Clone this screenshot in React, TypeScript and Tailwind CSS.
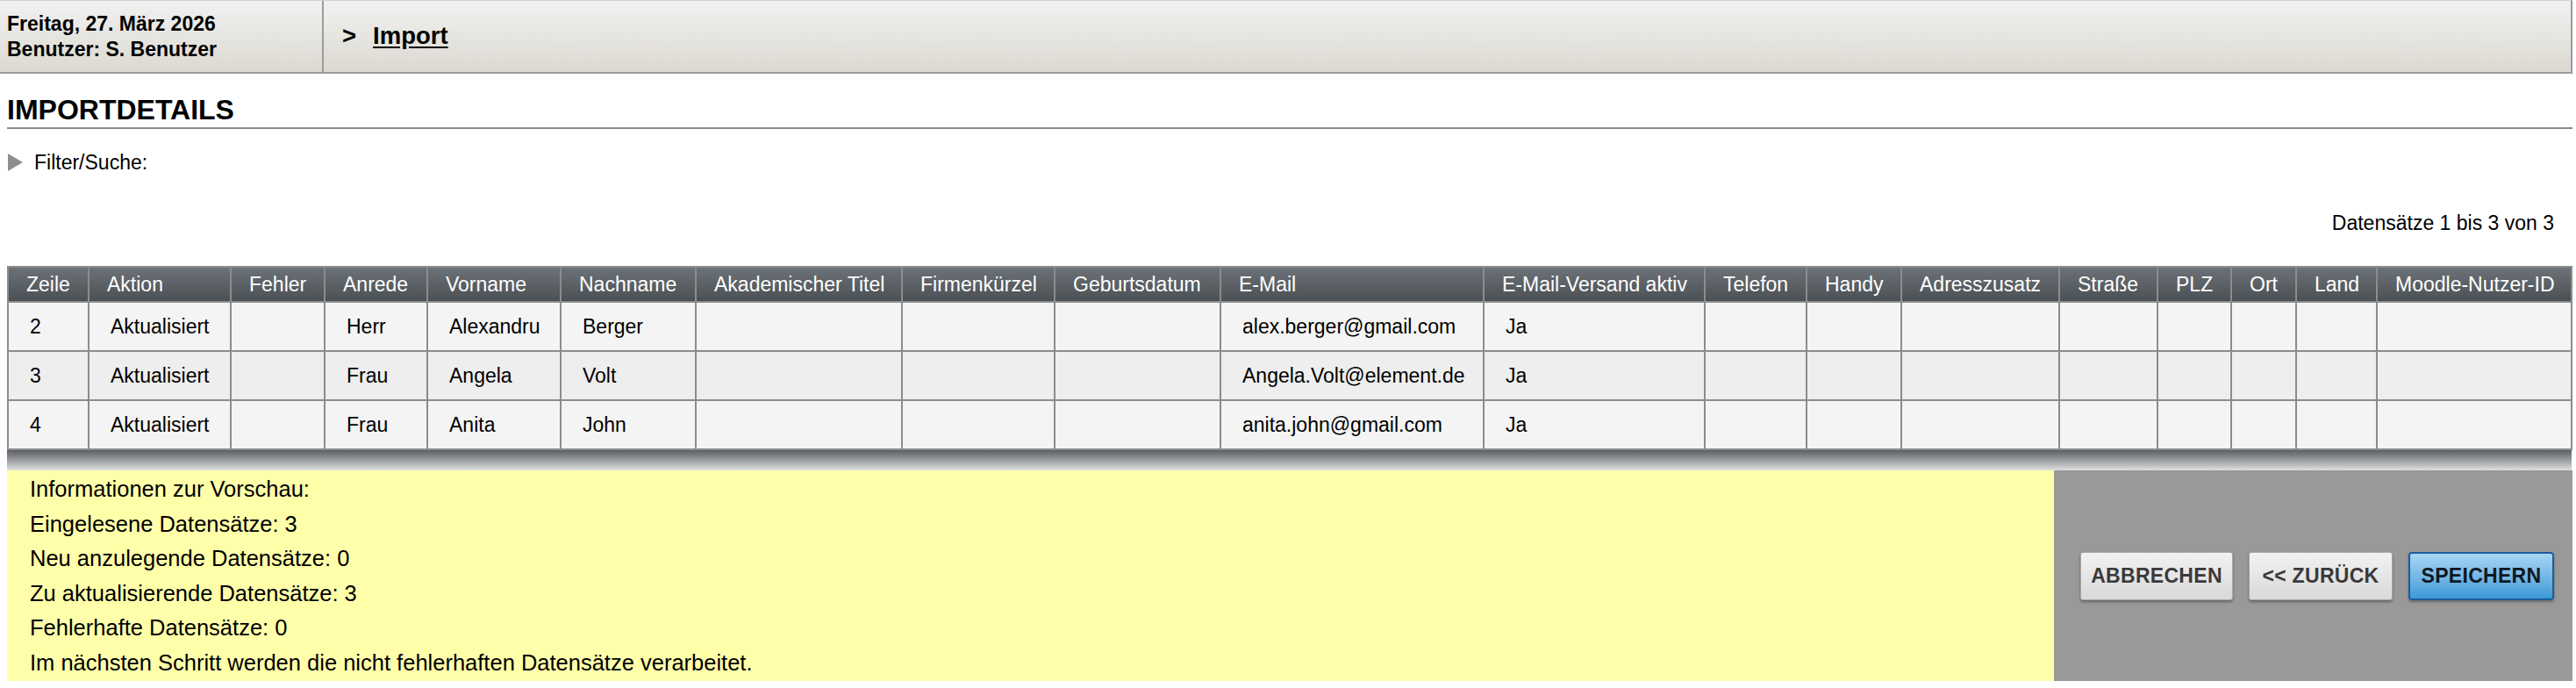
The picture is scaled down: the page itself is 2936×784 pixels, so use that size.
import React from "react";

type Row = {
  zeile: string;
  aktion: string;
  anrede: string;
  vorname: string;
  nachname: string;
  email: string;
  versand: string;
};

const COLUMNS: { label: string; width: number }[] = [
  { label: "Zeile", width: 92 },
  { label: "Aktion", width: 162 },
  { label: "Fehler", width: 107 },
  { label: "Anrede", width: 117 },
  { label: "Vorname", width: 152 },
  { label: "Nachname", width: 154 },
  { label: "Akademischer Titel", width: 235 },
  { label: "Firmenkürzel", width: 174 },
  { label: "Geburtsdatum", width: 189 },
  { label: "E-Mail", width: 300 },
  { label: "E-Mail-Versand aktiv", width: 252 },
  { label: "Telefon", width: 116 },
  { label: "Handy", width: 108 },
  { label: "Adresszusatz", width: 180 },
  { label: "Straße", width: 112 },
  { label: "PLZ", width: 84 },
  { label: "Ort", width: 74 },
  { label: "Land", width: 92 },
  { label: "Moodle-Nutzer-ID", width: 222 },
];

const ROWS: Row[] = [
  { zeile: "2", aktion: "Aktualisiert", anrede: "Herr", vorname: "Alexandru", nachname: "Berger", email: "alex.berger@gmail.com", versand: "Ja" },
  { zeile: "3", aktion: "Aktualisiert", anrede: "Frau", vorname: "Angela", nachname: "Volt", email: "Angela.Volt@element.de", versand: "Ja" },
  { zeile: "4", aktion: "Aktualisiert", anrede: "Frau", vorname: "Anita", nachname: "John", email: "anita.john@gmail.com", versand: "Ja" },
];

const INFO_LINES = [
  "Informationen zur Vorschau:",
  "Eingelesene Datensätze: 3",
  "Neu anzulegende Datensätze: 0",
  "Zu aktualisierende Datensätze: 3",
  "Fehlerhafte Datensätze: 0",
  "Im nächsten Schritt werden die nicht fehlerhaften Datensätze verarbeitet.",
];

function cellsFor(row: Row): string[] {
  return [row.zeile, row.aktion, "", row.anrede, row.vorname, row.nachname, "", "", "", row.email, row.versand, "", "", "", "", "", "", "", ""];
}

export default function App() {
  return (
    <div className="w-[2936px] h-[784px] overflow-hidden bg-white text-black font-['Liberation_Sans',Arial,sans-serif]">
      {/* Top bar */}
      <div className="flex h-[84px] w-[2932px] border-t border-[#d2d2d2] border-b-2 border-b-[#9a9a9a] border-r-2 border-r-[#9a9a9a] bg-linear-to-b from-[#f1f1f1] to-[#dcd9d1]">
        <div className="w-[369px] shrink-0 border-r-2 border-[#9c9c9c] pl-[8px] flex flex-col justify-center text-[23px] font-bold leading-[29px]">
          <span>Freitag, 27. März 2026</span>
          <span>Benutzer: S. Benutzer</span>
        </div>
        <div className="flex items-center pl-[21px] pb-[2px] text-[27.5px] font-bold">
          <span>&gt;</span>
          <a className="ml-[19px] underline underline-offset-[3px]">Import</a>
        </div>
      </div>

      <div className="pl-[8px] w-[2932px]">
        {/* Title */}
        <h1 className="mt-[23px] text-[32px] font-bold leading-[37px] pb-[1px] border-b-2 border-[#8c8c8c]">
          IMPORTDETAILS
        </h1>

        {/* Filter toggle */}
        <div className="mt-[25px] h-[26px] flex items-center gap-[13px] text-[23px]">
          <svg width="18" height="20" viewBox="0 0 18 20" className="shrink-0">
            <polygon points="1,0 18,10 1,20" fill="#8e8e8e" />
          </svg>
          <span>Filter/Suche:</span>
        </div>

        <div className="mt-[43px] pr-[21px] text-right text-[23px] leading-[26px]">Datensätze 1 bis 3 von 3</div>

        {/* Table */}
        <div className="mt-[36px] w-[2923px]">
          <table className="w-full table-fixed border-collapse text-[23px]">
            <colgroup>
              {COLUMNS.map((c) => (
                <col key={c.label} style={{ width: c.width }} />
              ))}
            </colgroup>
            <thead>
              <tr className="bg-linear-to-b from-[#6d7379] to-[#4a4f53]">
                {COLUMNS.map((c) => (
                  <th
                    key={c.label}
                    className="h-[40px] border-2 border-[#8c8c8c] pl-[20px] pr-0 text-left font-normal text-white whitespace-nowrap overflow-hidden"
                  >
                    {c.label}
                  </th>
                ))}
              </tr>
            </thead>
            <tbody>
              {ROWS.map((r, i) => (
                <tr key={r.zeile} className={i % 2 === 1 ? "bg-[#eeeeee]" : "bg-[#f4f4f4]"}>
                  {cellsFor(r).map((v, j) => (
                    <td key={j} className="h-[56px] border-2 border-[#8c8c8c] pl-[24px] whitespace-nowrap overflow-hidden">
                      {v}
                    </td>
                  ))}
                </tr>
              ))}
            </tbody>
          </table>
          <div className="h-[23px] bg-linear-to-b from-[#5b6066] to-[#e0e0e0]" />
        </div>

        {/* Preview info + actions */}
        <div className="flex h-[240px]">
          <div className="w-[2333px] shrink-0 bg-[#ffffaa] pl-[26px] pt-[2px] text-[25.5px] leading-[39.6px]">
            {INFO_LINES.map((l) => (
              <div key={l}>{l}</div>
            ))}
          </div>
          <div className="flex-1 bg-[#999999] flex items-center justify-end gap-[18px] pr-[21px]">
            <button className="w-[174px] h-[55px] rounded-[3px] border border-[#a8a8a8] bg-linear-to-b from-[#f2f2f2] to-[#d9d9d9] shadow-[0_2px_3px_rgba(0,0,0,0.35)] text-[23px] font-bold tracking-[0.3px] text-[#3a3a3a]">
              ABBRECHEN
            </button>
            <button className="w-[164px] h-[55px] rounded-[3px] border border-[#a8a8a8] bg-linear-to-b from-[#f2f2f2] to-[#d9d9d9] shadow-[0_2px_3px_rgba(0,0,0,0.35)] text-[23px] font-bold tracking-[0.3px] text-[#3a3a3a]">
              &lt;&lt; ZURÜCK
            </button>
            <button className="w-[166px] h-[55px] rounded-[4px] border-2 border-[#1b5d9e] bg-linear-to-b from-[#a8d6f3] to-[#3b99d8] shadow-[0_2px_3px_rgba(0,0,0,0.3)] text-[23px] font-bold tracking-[0.3px] text-[#0e1822]">
              SPEICHERN
            </button>
          </div>
        </div>
      </div>
    </div>
  );
}
